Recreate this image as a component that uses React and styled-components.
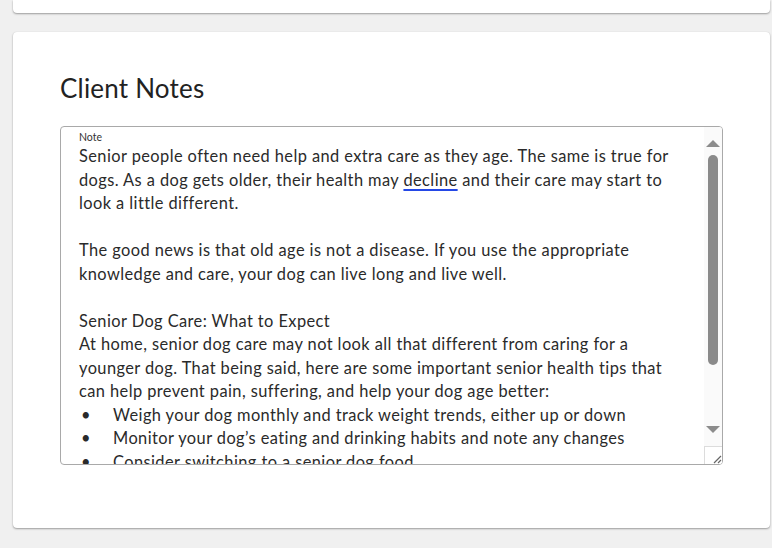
import React from "react";
import styled, { createGlobalStyle } from "styled-components";

const GlobalStyle = createGlobalStyle`
  html, body {
    margin: 0;
    padding: 0;
    background: #f0f0f0;
    font-family: "Lato", "Noto Sans", sans-serif;
  }
`;

const Page = styled.div`
  width: 772px;
  height: 548px;
  overflow: hidden;
  display: flex;
  flex-direction: column;
  gap: 19px;
  padding: 0 2px 0 13px;
  box-sizing: border-box;
`;

const Card = styled.div`
  background: #fff;
  border-radius: 4px;
  box-shadow: 0 1px 2px rgba(0, 0, 0, 0.35), 0 0 1px rgba(0, 0, 0, 0.1);
  box-sizing: border-box;
`;

const TopCard = styled(Card)`
  height: 13px;
  border-top-left-radius: 0;
  border-top-right-radius: 0;
`;

const NotesCard = styled(Card)`
  height: 496px;
  padding: 42px 47px 0 47px;
`;

const Title = styled.h2`
  margin: 0 0 24px 0;
  font-size: 26px;
  font-weight: 400;
  line-height: 28px;
  color: #222;
  letter-spacing: 0.2px;
`;

const Field = styled.div`
  height: 339px;
  border: 1px solid #a9a9a9;
  border-radius: 4px;
  box-sizing: border-box;
  display: flex;
  overflow: hidden;
`;

const Content = styled.div`
  flex: 1;
  padding: 4px 18px 0 18px;
  overflow: hidden;
  color: #2a2a2a;
`;

const Label = styled.div`
  font-size: 10.5px;
  line-height: 13px;
  color: #333;
`;

const Text = styled.div`
  font-size: 16.4px;
  line-height: 23.5px;
  letter-spacing: 0.42px;
`;

const Para = styled.p`
  margin: 0 0 23.5px 0;
`;

const Heading = styled.div``;

const Link = styled.a`
  color: #2a2a2a;
  text-decoration: underline;
  text-decoration-color: #2448e6;
  text-decoration-thickness: 2px;
  text-underline-offset: 3px;
`;

const Bullet = styled.div`
  display: flex;
  white-space: nowrap;
  &::before {
    content: "•";
    width: 34px;
    flex: none;
    padding-left: 2px;
    box-sizing: border-box;
  }
`;

const Scrollbar = styled.div`
  width: 18px;
  flex: none;
  background: #fafafa;
  display: flex;
  flex-direction: column;
  align-items: center;
`;

const Arrow = styled.div`
  width: 0;
  height: 0;
  margin: ${(p) => (p.$down ? "0 0 13px" : "13px 0 8px")};
  border-left: 7px solid transparent;
  border-right: 7px solid transparent;
  ${(p) => (p.$down ? "border-top" : "border-bottom")}: 7px solid #8c8c8c;
`;

const Thumb = styled.div`
  width: 10px;
  height: 210px;
  background: #8a8a8a;
  border-radius: 5px;
`;

const Track = styled.div`
  flex: 1;
`;

const Resizer = styled.div`
  width: 18px;
  height: 18px;
  background: #fff;
  border-left: 1px solid #dcdcdc;
  border-top: 1px solid #dcdcdc;
  box-sizing: border-box;
  display: flex;
  align-items: flex-end;
  justify-content: flex-end;
`;

export default function App() {
  return (
    <>
      <GlobalStyle />
      <Page>
        <TopCard />
        <NotesCard>
          <Title>Client Notes</Title>
          <Field>
            <Content>
              <Label>Note</Label>
              <Text>
                <Para>
                  Senior people often need help and extra care as they age. The same is true for
                  dogs. As a dog gets older, their health may <Link href="#">decline</Link> and
                  their care may start to look a little different.
                </Para>
                <Para>
                  The good news is that old age is not a disease. If you use the appropriate
                  knowledge and care, your dog can live long and live well.
                </Para>
                <Heading>Senior Dog Care: What to Expect</Heading>
                <div>
                  At home, senior dog care may not look all that different from caring for a
                  younger dog. That being said, here are some important senior health tips that
                  can help prevent pain, suffering, and help your dog age better:
                </div>
                <Bullet>Weigh your dog monthly and track weight trends, either up or down</Bullet>
                <Bullet>Monitor your dog’s eating and drinking habits and note any changes</Bullet>
                <Bullet>Consider switching to a senior dog food</Bullet>
                <Bullet>Schedule veterinary checkups twice a year</Bullet>
              </Text>
            </Content>
            <Scrollbar>
              <Arrow />
              <Thumb />
              <Track />
              <Arrow $down />
              <Resizer>
                <svg width="10" height="10" viewBox="0 0 10 10">
                  <path d="M9 2 L2 9 M9 6 L6 9" stroke="#666" strokeWidth="1.2" />
                </svg>
              </Resizer>
            </Scrollbar>
          </Field>
        </NotesCard>
      </Page>
    </>
  );
}
